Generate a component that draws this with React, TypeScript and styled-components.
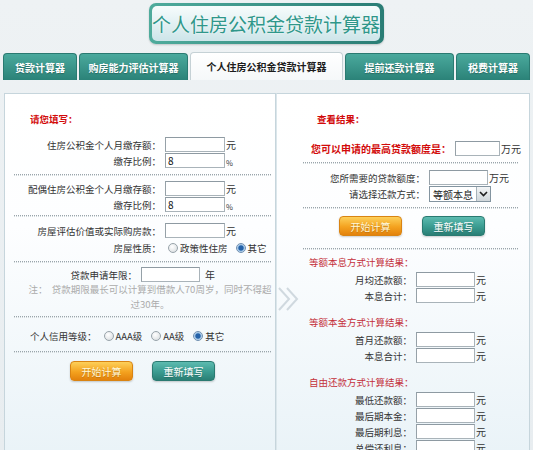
import React from "react";
import styled, { createGlobalStyle } from "styled-components";

const GlobalStyle = createGlobalStyle`
  html, body {
    margin: 0;
    padding: 0;
    overflow: hidden;
  }
  body {
    font-family: "Noto Sans CJK SC", "Liberation Sans", sans-serif;
    color: #333;
  }
  * {
    box-sizing: border-box;
  }
`;

const Page = styled.div`
  width: 533px;
  height: 450px;
  overflow: hidden;
  background: linear-gradient(#eef2f4, #e8edf0);
`;

const Header = styled.div`
  display: flex;
  justify-content: center;
  padding-top: 3px;
  height: 44px;
`;

const TitleBox = styled.div`
  width: 235px;
  height: 41px;
  padding: 3px 4px 3px 3px;
  border-radius: 7px;
  background: linear-gradient(90deg, #4fab9c, #2a7d75);
  box-shadow: 0 1px 2px rgba(0, 0, 0, 0.18);
`;

const TitleInner = styled.div`
  height: 100%;
  border-radius: 5px;
  background: linear-gradient(#f7fcfc, #cde5e9);
  display: flex;
  align-items: center;
  justify-content: center;
  font-size: 19px;
  color: #2f978a;
  text-shadow: 0 0 2px #fff;
`;

const TabBar = styled.div`
  display: flex;
  align-items: flex-end;
  gap: 2px;
  height: 28px;
  margin-top: 8px;
  padding-left: 3px;
`;

const Tab = styled.div<{ $w: number; $active?: boolean }>`
  width: ${(p) => p.$w}px;
  height: ${(p) => (p.$active ? 28 : 27)}px;
  display: flex;
  align-items: center;
  justify-content: center;
  font-size: 10px;
  font-weight: bold;
  border-radius: 4px 4px 0 0;
  border: 1px solid ${(p) => (p.$active ? "#c5d1d5" : "#2a7a71")};
  border-bottom: none;
  color: ${(p) => (p.$active ? "#1c1c1c" : "#fff")};
  background: ${(p) =>
    p.$active
      ? "linear-gradient(#ffffff, #f5f8f9)"
      : "linear-gradient(#4aa99d, #2b8278)"};
  text-shadow: ${(p) => (p.$active ? "none" : "0 1px 1px rgba(0,0,0,0.25)")};
`;

const Body = styled.div`
  position: relative;
  display: flex;
  width: 526px;
  margin: 13px 0 0 4px;
`;

const Panel = styled.div<{ $w: number; $side: "left" | "right" }>`
  width: ${(p) => p.$w}px;
  height: 380px;
  border: 1px solid #c6d5dc;
  border-bottom: none;
  ${(p) => (p.$side === "right" ? "border-left-color: #dbe6eb;" : "")}
  background: linear-gradient(#ffffff 0%, #fdfeff 35%, #e8f2f7 100%);
  display: flex;
  flex-direction: column;
`;

const SectionTitle = styled.div<{ $pad: number; $mt: number }>`
  height: 12px;
  line-height: 12px;
  margin-top: ${(p) => p.$mt}px;
  padding-left: ${(p) => p.$pad}px;
  font-size: 9.5px;
  font-weight: bold;
  color: #d20a0a;
`;

const ResultTitle = styled.div<{ $mt: number }>`
  height: 12px;
  line-height: 12px;
  margin-top: ${(p) => p.$mt}px;
  padding-left: 32px;
  font-size: 9.5px;
  color: #c4303a;
`;

const FieldRow = styled.div<{ $mt?: number; $h?: number }>`
  display: flex;
  align-items: center;
  height: ${(p) => p.$h ?? 15}px;
  margin-top: ${(p) => p.$mt ?? 1}px;
  white-space: nowrap;
`;

const Label = styled.span<{ $w: number; $strong?: boolean }>`
  flex-shrink: 0;
  width: ${(p) => p.$w}px;
  text-align: right;
  font-size: ${(p) => (p.$strong ? 10 : 9.5)}px;
  font-weight: ${(p) => (p.$strong ? "bold" : "normal")};
  color: ${(p) => (p.$strong ? "#d20a0a" : "#333")};
`;

const Field = styled.input<{ $w?: number }>`
  width: ${(p) => p.$w ?? 60}px;
  height: 15px;
  margin: 0 0 0 4px;
  padding: 0 2px;
  border: 1px solid #a9b3b9;
  border-top-color: #8e9aa2;
  border-left-color: #96a1a8;
  background: #fff;
  font-family: inherit;
  font-size: 10px;
  color: #111;
  outline: none;
`;

const Unit = styled.span<{ $small?: boolean; $gap?: number }>`
  margin-left: ${(p) => p.$gap ?? 1}px;
  font-size: ${(p) => (p.$small ? 7.5 : 10)}px;
  color: #333;
  align-self: ${(p) => (p.$small ? "flex-end" : "center")};
`;

const Separator = styled.div<{ $mt: number; $ml: number; $mr: number }>`
  height: 2px;
  margin: ${(p) => p.$mt}px ${(p) => p.$mr}px 0 ${(p) => p.$ml}px;
  border-top: 1px dotted #9aa5ab;
  border-bottom: 1px dotted #d3dadd;
`;

const RadioRow = styled.div<{ $mt: number; $pad?: number }>`
  display: flex;
  align-items: center;
  height: 14px;
  margin-top: ${(p) => p.$mt}px;
  padding-left: ${(p) => p.$pad ?? 0}px;
  font-size: 9.5px;
  white-space: nowrap;
`;

const RadioOption = styled.label<{ $ml: number }>`
  display: flex;
  align-items: center;
  margin-left: ${(p) => p.$ml}px;
  color: #333;
`;

const RadioDot = styled.span<{ $on?: boolean }>`
  width: 10px;
  height: 10px;
  margin-right: 2px;
  border-radius: 50%;
  border: 1px solid ${(p) => (p.$on ? "#6f8fb0" : "#98a3aa")};
  background: ${(p) =>
    p.$on
      ? "radial-gradient(circle, #2562a8 0 2.2px, #8bb6df 3px, #e9f1f8 4.5px)"
      : "radial-gradient(circle at 40% 35%, #ffffff, #d4d9dc)"};
`;

const Note = styled.div`
  padding-left: 20px;
  text-align: center;
  font-size: 9.5px;
  line-height: 15px;
  color: #ababab;
  white-space: nowrap;
`;

const ButtonRow = styled.div<{ $mt: number; $pad: number; $gap: number }>`
  display: flex;
  gap: ${(p) => p.$gap}px;
  margin-top: ${(p) => p.$mt}px;
  padding-left: ${(p) => p.$pad}px;
`;

const Btn = styled.button<{ $tone: "orange" | "teal" }>`
  width: 63px;
  height: 20px;
  padding: 0;
  border-radius: 4px;
  font-family: inherit;
  font-size: 10px;
  cursor: pointer;
  border: 1px solid ${(p) => (p.$tone === "orange" ? "#d98413" : "#2a7a71")};
  color: ${(p) => (p.$tone === "orange" ? "#fff6d8" : "#ffffff")};
  background: ${(p) =>
    p.$tone === "orange"
      ? "linear-gradient(#fdd05a, #f4a21f 55%, #e3820c)"
      : "linear-gradient(#5dbbb0, #3a9b90 55%, #2a7f75)"};
  box-shadow: 0 1px 2px rgba(0, 0, 0, 0.2);
  text-shadow: 0 1px 1px rgba(0, 0, 0, 0.2);
`;

const SelectBox = styled.div`
  display: flex;
  align-items: center;
  width: 62px;
  height: 16px;
  margin-left: 4px;
  border: 1px solid #8394a0;
  background: #fff;
`;

const SelectText = styled.span`
  flex: 1;
  padding-left: 3px;
  font-size: 10px;
  color: #222;
`;

const SelectArrow = styled.span`
  width: 14px;
  height: 100%;
  display: flex;
  align-items: center;
  justify-content: center;
  border-left: 1px solid #a7b2b9;
  background: linear-gradient(#f3f5f6, #cfd6da);
`;

const Chevron = styled.svg`
  position: absolute;
  left: 272px;
  top: 194px;
`;

const tabs = [
  { w: 74, text: "贷款计算器" },
  { w: 109, text: "购房能力评估计算器" },
  { w: 153, text: "个人住房公积金贷款计算器", active: true },
  { w: 109, text: "提前还款计算器" },
  { w: 74, text: "税费计算器" },
];

const resultGroups = [
  { title: "等额本息方式计算结果：", mt: 6, rows: ["月均还款额：", "本息合计："] },
  { title: "等额本金方式计算结果：", mt: 13, rows: ["首月还款额：", "本息合计："] },
  {
    title: "自由还款方式计算结果：",
    mt: 13,
    rows: ["最低还款额：", "最后期本金：", "最后期利息：", "总偿还利息："],
  },
];

const App = () => {
  return (
    <Page>
      <GlobalStyle />
      <Header>
        <TitleBox>
          <TitleInner>个人住房公积金贷款计算器</TitleInner>
        </TitleBox>
      </Header>

      <TabBar>
        {tabs.map((t) => (
          <Tab key={t.text} $w={t.w} $active={t.active}>
            {t.text}
          </Tab>
        ))}
      </TabBar>

      <Body>
        <Panel $w={272} $side="left">
          <SectionTitle $pad={25} $mt={19}>请您填写：</SectionTitle>

          <FieldRow $mt={12}>
            <Label $w={156}>住房公积金个人月缴存额：</Label>
            <Field />
            <Unit>元</Unit>
          </FieldRow>
          <FieldRow>
            <Label $w={156}>缴存比例：</Label>
            <Field defaultValue="8" />
            <Unit $small>%</Unit>
          </FieldRow>

          <Separator $mt={6} $ml={9} $mr={4} />

          <FieldRow $mt={5}>
            <Label $w={156}>配偶住房公积金个人月缴存额：</Label>
            <Field />
            <Unit>元</Unit>
          </FieldRow>
          <FieldRow>
            <Label $w={156}>缴存比例：</Label>
            <Field defaultValue="8" />
            <Unit $small>%</Unit>
          </FieldRow>

          <Separator $mt={3} $ml={9} $mr={4} />

          <FieldRow $mt={6}>
            <Label $w={156}>房屋评估价值或实际购房款：</Label>
            <Field />
            <Unit>元</Unit>
          </FieldRow>
          <RadioRow $mt={3}>
            <Label $w={156}>房屋性质：</Label>
            <RadioOption $ml={7}>
              <RadioDot />
              政策性住房
            </RadioOption>
            <RadioOption $ml={8}>
              <RadioDot $on />
              其它
            </RadioOption>
          </RadioRow>

          <Separator $mt={6} $ml={9} $mr={4} />

          <FieldRow $mt={4}>
            <Label $w={132}>贷款申请年限：</Label>
            <Field $w={59} />
            <Unit $gap={5}>年</Unit>
          </FieldRow>
          <Note>
            注：&nbsp;&nbsp;贷款期限最长可以计算到借款人70周岁，同时不得超
            <br />
            过30年。
          </Note>

          <Separator $mt={4} $ml={9} $mr={4} />

          <RadioRow $mt={11} $pad={25}>
            个人信用等级：
            <RadioOption $ml={7}>
              <RadioDot />
              AAA级
            </RadioOption>
            <RadioOption $ml={9}>
              <RadioDot />
              AA级
            </RadioOption>
            <RadioOption $ml={9}>
              <RadioDot $on />
              其它
            </RadioOption>
          </RadioRow>

          <Separator $mt={8} $ml={9} $mr={4} />

          <ButtonRow $mt={8} $pad={65} $gap={19}>
            <Btn $tone="orange">开始计算</Btn>
            <Btn $tone="teal">重新填写</Btn>
          </ButtonRow>
        </Panel>

        <Panel $w={254} $side="right">
          <SectionTitle $pad={40} $mt={19}>查看结果：</SectionTitle>

          <FieldRow $mt={16}>
            <Label $w={174} $strong>
              您可以申请的最高贷款额度是：
            </Label>
            <Field $w={45} />
            <Unit>万元</Unit>
          </FieldRow>

          <Separator $mt={6} $ml={26} $mr={11} />

          <FieldRow $mt={6}>
            <Label $w={148}>您所需要的贷款额度：</Label>
            <Field $w={59} />
            <Unit>万元</Unit>
          </FieldRow>
          <FieldRow $mt={1} $h={16}>
            <Label $w={148}>请选择还款方式：</Label>
            <SelectBox>
              <SelectText>等额本息</SelectText>
              <SelectArrow>
                <svg width="9" height="6" viewBox="0 0 9 6">
                  <polyline
                    points="1,1 4.5,4.5 8,1"
                    fill="none"
                    stroke="#1e1e1e"
                    strokeWidth="1.6"
                  />
                </svg>
              </SelectArrow>
            </SelectBox>
          </FieldRow>

          <Separator $mt={5} $ml={26} $mr={11} />

          <ButtonRow $mt={7} $pad={62} $gap={20}>
            <Btn $tone="orange">开始计算</Btn>
            <Btn $tone="teal">重新填写</Btn>
          </ButtonRow>

          <Separator $mt={12} $ml={26} $mr={11} />

          {resultGroups.map((g) => (
            <React.Fragment key={g.title}>
              <ResultTitle $mt={g.mt}>{g.title}</ResultTitle>
              {g.rows.map((r, i) => (
                <FieldRow key={r} $mt={i === 0 ? 4 : 1}>
                  <Label $w={135}>{r}</Label>
                  <Field $w={59} />
                  <Unit>元</Unit>
                </FieldRow>
              ))}
            </React.Fragment>
          ))}
        </Panel>

        <Chevron width="26" height="24" viewBox="0 0 26 24">
          <polyline points="3,1 13,12 3,23" fill="none" stroke="#d0d9df" strokeWidth="2" />
          <polyline points="11,1 21,12 11,23" fill="none" stroke="#d0d9df" strokeWidth="2" />
        </Chevron>
      </Body>
    </Page>
  );
};

export default App;
